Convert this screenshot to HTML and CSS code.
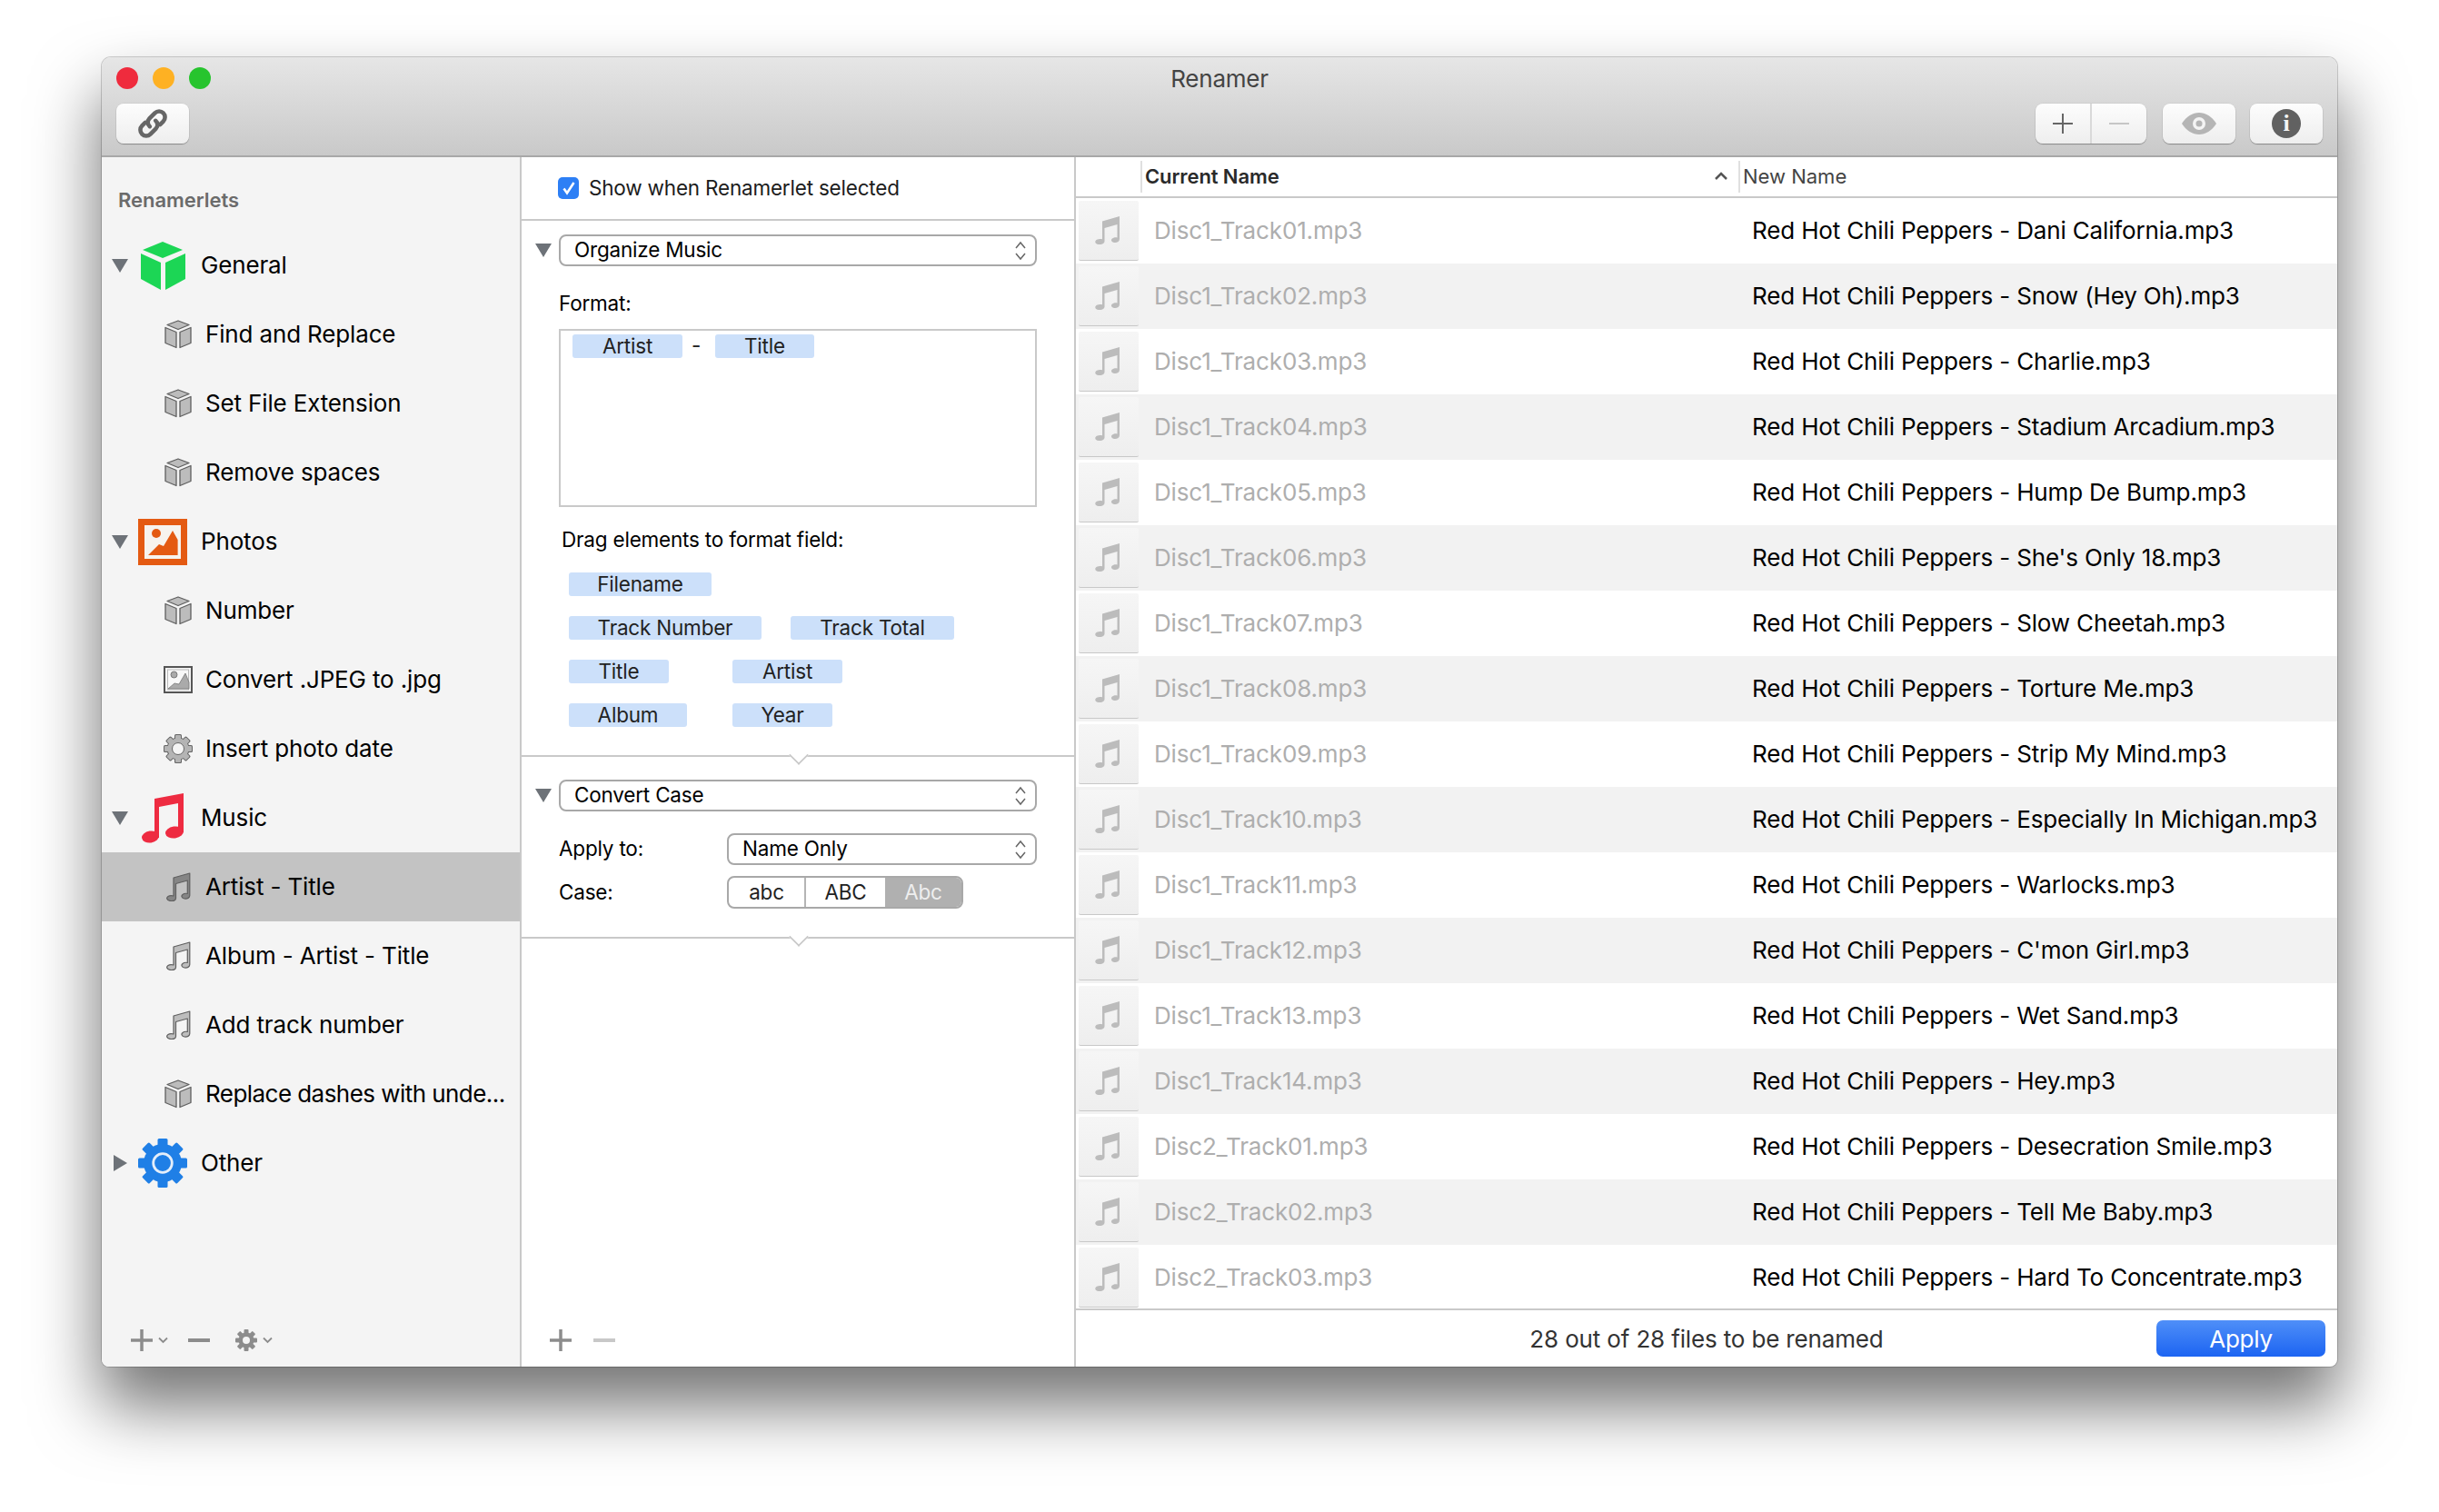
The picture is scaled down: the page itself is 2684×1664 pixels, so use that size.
FILE: index.html
```html
<!DOCTYPE html>
<html lang="en">
<head>
<meta charset="utf-8">
<title>Renamer</title>
<link rel="stylesheet" href="styles.css">
</head>
<body>
<svg class="defs" width="0" height="0" aria-hidden="true">
  <symbol id="mini-cube" viewBox="0 0 30 32">
    <g fill="#bcbcbc" stroke="#5f5f5f" stroke-width="1.3" stroke-linejoin="round">
      <path d="M15 1l12 4.500-12 5-12-5z"/>
      <path d="M1 8.500l12 5v17l-12-5z"/>
      <path d="M29 8.500l-12 5v17l12-5z"/>
    </g>
  </symbol>
  <symbol id="mini-note" viewBox="0 0 27 32">
    <path d="M8.500 6L26.300 1V25.500C26.300 28 23.500 29.500 20.500 29C17.500 28.500 16.500 26 18.500 24.500C20 23.300 22 23 23.800 23.500V9L11 12.500V28.500C11 31 8 32 4.500 31.400C1 30.800 .2 28 2.500 26.500C4 25.500 6.500 25.400 8.500 26Z" fill="currentColor" stroke="#5f5f5f" stroke-width="1.2" stroke-linejoin="round"/>
  </symbol>
  <symbol id="file-note" viewBox="0 0 27 31">
    <path d="M8 5.500L27 0V25C27 28 24 29.500 21 29C18 28.500 17 26 19 24.500C21 23 23 23 24.500 23.500V9L10.500 13V27.500C10.500 30 7.500 31.500 4 31C0 30.500-1 27.500 2 25.800C4 24.700 6 24.700 8 25.300Z" fill="#bcbcbc"/>
  </symbol>
  <symbol id="mini-gear" viewBox="0 0 32 32">
    <g fill="#666">
      <circle cx="16" cy="16" r="12.500"/>
      <rect x="12" y="0" width="8" height="32" rx="1.500"/>
      <rect x="12" y="0" width="8" height="32" rx="1.500" transform="rotate(45 16 16)"/>
      <rect x="12" y="0" width="8" height="32" rx="1.500" transform="rotate(90 16 16)"/>
      <rect x="12" y="0" width="8" height="32" rx="1.500" transform="rotate(135 16 16)"/>
    </g>
    <g fill="#b4b4b4">
      <circle cx="16" cy="16" r="11.500"/>
      <rect x="13" y="1" width="6" height="30" rx="1"/>
      <rect x="13" y="1" width="6" height="30" rx="1" transform="rotate(45 16 16)"/>
      <rect x="13" y="1" width="6" height="30" rx="1" transform="rotate(90 16 16)"/>
      <rect x="13" y="1" width="6" height="30" rx="1" transform="rotate(135 16 16)"/>
    </g>
    <circle cx="16" cy="16" r="6.500" fill="#f4f4f4" stroke="#666" stroke-width="1"/>
  </symbol>
</svg>

<div class="window">
  <header class="titlebar">
    <div class="titlerow">
      <div class="lights">
        <span class="light red"></span>
        <span class="light amber"></span>
        <span class="light green"></span>
      </div>
      <div class="title">Renamer</div>
      <div></div>
    </div>
    <div class="toolbar">
      <button class="tool">
        <svg width="36" height="36" viewBox="-18 -18 36 36" fill="none" stroke="#666" stroke-width="4.600" stroke-linecap="round">
          <g transform="rotate(-45)">
            <path d="M-4.500 0a6 6 0 0 1 6-6.500H10a6.500 6.500 0 0 1 0 13H5"/>
            <path d="M4.500 0a6 6 0 0 1-6 6.500H-10a6.500 6.500 0 0 1 0-13H-5"/>
          </g>
        </svg>
      </button>
      <div class="tool-group">
        <div class="tool-seg">
          <button class="seg seg-l">
            <svg width="24" height="24" viewBox="0 0 24 24" stroke="#666" stroke-width="2"><path d="M12 1v22M1 12h22"/></svg>
          </button>
          <button class="seg">
            <svg width="24" height="24" viewBox="0 0 24 24" stroke="#c6c6c6" stroke-width="2"><path d="M1 12h22"/></svg>
          </button>
        </div>
        <button class="tool">
          <svg width="40" height="26" viewBox="0 0 40 26"><path d="M1 13C6 5 13 1 20 1S34 5 39 13C34 21 27 25 20 25S6 21 1 13Z" fill="#b5b5b5"/><circle cx="20" cy="13" r="7" fill="#f4f4f4"/><circle cx="20" cy="13" r="3.500" fill="#b5b5b5"/></svg>
        </button>
        <button class="tool">
          <span class="info">i</span>
        </button>
      </div>
    </div>
  </header>

  <div class="panes">
    <aside class="sidebar">
      <div class="side-head">Renamerlets</div>
      <nav class="tree">
        <div class="row group">
          <span class="tri"></span>
          <span class="gicon">
            <svg width="49" height="53" viewBox="0 0 49 53" fill="#1cd655"><path d="M24 0l22 9-22 9-22-9z"/><path d="M0 13l22 10v30L0 41z"/><path d="M49 13L27 23v30l22-12z"/></svg>
          </span>
          <span class="rtext">General</span>
        </div>
        <div class="row child"><svg class="cicon"><use href="#mini-cube"/></svg><span class="rtext">Find and Replace</span></div>
        <div class="row child"><svg class="cicon"><use href="#mini-cube"/></svg><span class="rtext">Set File Extension</span></div>
        <div class="row child"><svg class="cicon"><use href="#mini-cube"/></svg><span class="rtext">Remove spaces</span></div>
        <div class="row group">
          <span class="tri"></span>
          <span class="gicon">
            <svg width="54" height="51" viewBox="0 0 54 51"><rect width="54" height="51" fill="#e45a12"/><rect x="7" y="7" width="40" height="37" fill="#f7f3ee"/><circle cx="20" cy="16" r="5" fill="#e45a12"/><path d="M11 40l12-12 5 2 10-17 5.600 10V40z" fill="#e45a12"/></svg>
          </span>
          <span class="rtext">Photos</span>
        </div>
        <div class="row child"><svg class="cicon"><use href="#mini-cube"/></svg><span class="rtext">Number</span></div>
        <div class="row child">
          <svg class="cicon" viewBox="0 0 32 32"><rect x="1" y="2" width="30" height="28" fill="#f4f4f4" stroke="#555" stroke-width="2"/><rect x="4.500" y="5" width="23" height="22" fill="#f8f8f8" stroke="#bbb"/><circle cx="11.500" cy="10.500" r="3.500" fill="#aaa" stroke="#666" stroke-width=".8"/><path d="M5 26l7-6 5 1 7-12 4 10v7z" fill="#aaa" stroke="#777" stroke-width=".8"/></svg>
          <span class="rtext">Convert .JPEG to .jpg</span>
        </div>
        <div class="row child"><svg class="cicon"><use href="#mini-gear"/></svg><span class="rtext">Insert photo date</span></div>
        <div class="row group">
          <span class="tri"></span>
          <span class="gicon">
            <svg width="46" height="55" viewBox="0 0 46 55" fill="#ee2b41"><path d="M14 6L46 0V43H40V11L19 15V49H14Z"/><ellipse cx="36" cy="43" rx="10" ry="6.500" transform="rotate(-8 36 43)"/><ellipse cx="9.500" cy="48" rx="9.500" ry="6.500" transform="rotate(-8 9.500 48)"/></svg>
          </span>
          <span class="rtext">Music</span>
        </div>
        <div class="row child selected"><svg class="cicon"><use href="#mini-note"/></svg><span class="rtext">Artist - Title</span></div>
        <div class="row child"><svg class="cicon"><use href="#mini-note"/></svg><span class="rtext">Album - Artist - Title</span></div>
        <div class="row child"><svg class="cicon"><use href="#mini-note"/></svg><span class="rtext">Add track number</span></div>
        <div class="row child"><svg class="cicon"><use href="#mini-cube"/></svg><span class="rtext tight">Replace dashes with unde...</span></div>
        <div class="row group">
          <span class="tri closed"></span>
          <span class="gicon">
            <svg width="54" height="54" viewBox="0 0 54 54"><g fill="#1f7fe6"><circle cx="27" cy="27" r="21"/><rect x="21.500" y="0" width="11" height="54" rx="1.500"/><rect x="21.500" y="0" width="11" height="54" rx="1.500" transform="rotate(45 27 27)"/><rect x="21.500" y="0" width="11" height="54" rx="1.500" transform="rotate(90 27 27)"/><rect x="21.500" y="0" width="11" height="54" rx="1.500" transform="rotate(135 27 27)"/></g><circle cx="27" cy="27" r="10.300" fill="#1f7fe6" stroke="#e4eefa" stroke-width="2.800"/></svg>
          </span>
          <span class="rtext">Other</span>
        </div>
      </nav>
      <div class="side-foot">
        <svg width="24" height="24" viewBox="0 0 24 24" stroke="#8c8c8c" stroke-width="3.500"><path d="M12 0v24M0 12h24"/></svg>
        <svg class="f-chev" width="11" height="8" viewBox="0 0 11 8" fill="none" stroke="#8c8c8c" stroke-width="1.800"><path d="M1 1.500l4.500 4.500L10 1.500"/></svg>
        <svg class="f-minus" width="24" height="4" viewBox="0 0 24 4" fill="#8c8c8c"><rect width="24" height="4"/></svg>
        <svg class="f-gear" width="24" height="24" viewBox="0 0 24 24"><g fill="#8c8c8c"><circle cx="12" cy="12" r="8.500"/><rect x="9.500" y="0" width="5" height="24" rx="1"/><rect x="9.500" y="0" width="5" height="24" rx="1" transform="rotate(45 12 12)"/><rect x="9.500" y="0" width="5" height="24" rx="1" transform="rotate(90 12 12)"/><rect x="9.500" y="0" width="5" height="24" rx="1" transform="rotate(135 12 12)"/></g><circle cx="12" cy="12" r="4" fill="#f4f4f4"/></svg>
        <svg class="f-chev" width="11" height="8" viewBox="0 0 11 8" fill="none" stroke="#8c8c8c" stroke-width="1.800"><path d="M1 1.500l4.500 4.500L10 1.500"/></svg>
      </div>
    </aside>

    <section class="editor">
      <div class="show-row">
        <span class="check"><svg width="16" height="16" viewBox="0 0 16 16" fill="none" stroke="#fff" stroke-width="2.600"><path d="M2.500 8.500l3.500 5L13.500 2"/></svg></span>
        <span class="nudge">Show when Renamerlet selected</span>
      </div>

      <div class="block block-music">
        <div class="head">
          <span class="tri small"></span>
          <div class="popup"><span class="nudge">Organize Music</span><svg class="updown" width="14" height="22" viewBox="0 0 14 22" fill="none" stroke="#666" stroke-width="1.500"><path d="M2 8l5-6 5 6M2 14l5 6 5-6"/></svg></div>
        </div>
        <div class="label format-label">Format:</div>
        <div class="format-box">
          <span class="token w121">Artist</span>
          <span class="dash">-</span>
          <span class="token w109">Title</span>
        </div>
        <div class="label drag-label">Drag elements to format field:</div>
        <div class="palette">
          <div class="pal-row"><span class="token w157">Filename</span></div>
          <div class="pal-row"><span class="token w212">Track Number</span><span class="token w180 after-track">Track Total</span></div>
          <div class="pal-row"><span class="token w110">Title</span><span class="token w121 after-title">Artist</span></div>
          <div class="pal-row"><span class="token w130">Album</span><span class="token w110 after-album">Year</span></div>
        </div>
      </div>

      <div class="block block-case">
        <div class="head">
          <span class="tri small"></span>
          <div class="popup"><span class="nudge">Convert Case</span><svg class="updown" width="14" height="22" viewBox="0 0 14 22" fill="none" stroke="#666" stroke-width="1.500"><path d="M2 8l5-6 5 6M2 14l5 6 5-6"/></svg></div>
        </div>
        <div class="form-row apply-row">
          <span class="form-label">Apply to:</span>
          <div class="popup"><span class="nudge">Name Only</span><svg class="updown" width="14" height="22" viewBox="0 0 14 22" fill="none" stroke="#666" stroke-width="1.500"><path d="M2 8l5-6 5 6M2 14l5 6 5-6"/></svg></div>
        </div>
        <div class="form-row case-row">
          <span class="form-label">Case:</span>
          <div class="segmented">
            <span class="sg sg-a">abc</span>
            <span class="sg sg-b">ABC</span>
            <span class="sg sg-c">Abc</span>
          </div>
        </div>
      </div>

      <div class="editor-fill"></div>
      <div class="editor-foot">
        <svg width="24" height="24" viewBox="0 0 24 24" stroke="#8c8c8c" stroke-width="3.500"><path d="M12 0v24M0 12h24"/></svg>
        <svg width="24" height="4" viewBox="0 0 24 4" fill="#c8c8c8"><rect width="24" height="4"/></svg>
      </div>
    </section>

    <main class="files">
      <div class="thead">
        <div class="th-icon"></div>
        <div class="th th-current"><span>Current Name</span><svg width="14" height="9" viewBox="0 0 14 9" fill="none" stroke="#555" stroke-width="2.500"><path d="M1 8l6-6 6 6"/></svg></div>
        <div class="th th-new">New Name</div>
      </div>
      <div class="tbody">
        <div class="frow"><span class="ficon"><svg width="27" height="31"><use href="#file-note"/></svg></span><span class="cur">Disc1_Track01.mp3</span><span class="new">Red Hot Chili Peppers - Dani California.mp3</span></div>
        <div class="frow"><span class="ficon"><svg width="27" height="31"><use href="#file-note"/></svg></span><span class="cur">Disc1_Track02.mp3</span><span class="new">Red Hot Chili Peppers - Snow (Hey Oh).mp3</span></div>
        <div class="frow"><span class="ficon"><svg width="27" height="31"><use href="#file-note"/></svg></span><span class="cur">Disc1_Track03.mp3</span><span class="new">Red Hot Chili Peppers - Charlie.mp3</span></div>
        <div class="frow"><span class="ficon"><svg width="27" height="31"><use href="#file-note"/></svg></span><span class="cur">Disc1_Track04.mp3</span><span class="new">Red Hot Chili Peppers - Stadium Arcadium.mp3</span></div>
        <div class="frow"><span class="ficon"><svg width="27" height="31"><use href="#file-note"/></svg></span><span class="cur">Disc1_Track05.mp3</span><span class="new">Red Hot Chili Peppers - Hump De Bump.mp3</span></div>
        <div class="frow"><span class="ficon"><svg width="27" height="31"><use href="#file-note"/></svg></span><span class="cur">Disc1_Track06.mp3</span><span class="new">Red Hot Chili Peppers - She's Only 18.mp3</span></div>
        <div class="frow"><span class="ficon"><svg width="27" height="31"><use href="#file-note"/></svg></span><span class="cur">Disc1_Track07.mp3</span><span class="new">Red Hot Chili Peppers - Slow Cheetah.mp3</span></div>
        <div class="frow"><span class="ficon"><svg width="27" height="31"><use href="#file-note"/></svg></span><span class="cur">Disc1_Track08.mp3</span><span class="new">Red Hot Chili Peppers - Torture Me.mp3</span></div>
        <div class="frow"><span class="ficon"><svg width="27" height="31"><use href="#file-note"/></svg></span><span class="cur">Disc1_Track09.mp3</span><span class="new">Red Hot Chili Peppers - Strip My Mind.mp3</span></div>
        <div class="frow"><span class="ficon"><svg width="27" height="31"><use href="#file-note"/></svg></span><span class="cur">Disc1_Track10.mp3</span><span class="new">Red Hot Chili Peppers - Especially In Michigan.mp3</span></div>
        <div class="frow"><span class="ficon"><svg width="27" height="31"><use href="#file-note"/></svg></span><span class="cur">Disc1_Track11.mp3</span><span class="new">Red Hot Chili Peppers - Warlocks.mp3</span></div>
        <div class="frow"><span class="ficon"><svg width="27" height="31"><use href="#file-note"/></svg></span><span class="cur">Disc1_Track12.mp3</span><span class="new">Red Hot Chili Peppers - C'mon Girl.mp3</span></div>
        <div class="frow"><span class="ficon"><svg width="27" height="31"><use href="#file-note"/></svg></span><span class="cur">Disc1_Track13.mp3</span><span class="new">Red Hot Chili Peppers - Wet Sand.mp3</span></div>
        <div class="frow"><span class="ficon"><svg width="27" height="31"><use href="#file-note"/></svg></span><span class="cur">Disc1_Track14.mp3</span><span class="new">Red Hot Chili Peppers - Hey.mp3</span></div>
        <div class="frow"><span class="ficon"><svg width="27" height="31"><use href="#file-note"/></svg></span><span class="cur">Disc2_Track01.mp3</span><span class="new">Red Hot Chili Peppers - Desecration Smile.mp3</span></div>
        <div class="frow"><span class="ficon"><svg width="27" height="31"><use href="#file-note"/></svg></span><span class="cur">Disc2_Track02.mp3</span><span class="new">Red Hot Chili Peppers - Tell Me Baby.mp3</span></div>
        <div class="frow"><span class="ficon"><svg width="27" height="31"><use href="#file-note"/></svg></span><span class="cur">Disc2_Track03.mp3</span><span class="new">Red Hot Chili Peppers - Hard To Concentrate.mp3</span></div>
      </div>
      <div class="status">
        <span class="status-text">28 out of 28 files to be renamed</span>
        <button class="apply">Apply</button>
      </div>
    </main>
  </div>
</div>
</body>
</html>
```
FILE: styles.css
```css
* { box-sizing: border-box; }
html, body { margin: 0; height: 100%; }
body {
  background: #fff;
  font-family: Inter, "Noto Sans", sans-serif;
  color: #000;
  padding: 63px 112px 0;
  overflow: hidden;
}
.defs { position: absolute; }

.window {
  width: 2460px;
  height: 1441px;
  border-radius: 10px 10px 8px 8px;
  background: #fff;
  box-shadow: 0 0 0 1px rgba(0,0,0,.18), 0 42px 72px 2px rgba(0,0,0,.55);
  display: flex;
  flex-direction: column;
  overflow: hidden;
}

.titlebar {
  height: 110px;
  flex: none;
  background: linear-gradient(#e6e6e6, #c9c9c9);
  border-bottom: 2px solid #a8a8a8;
}
.titlerow {
  height: 46px;
  display: grid;
  grid-template-columns: 1fr auto 1fr;
  align-items: center;
}
.lights { display: flex; gap: 16px; padding-left: 16px; }
.light { width: 24px; height: 24px; border-radius: 50%; }
.red { background: #ef2b3d; }
.amber { background: #feb123; }
.green { background: #27c42e; }
.title { font-size: 26px; color: #444; letter-spacing: -.25px; }

.toolbar {
  margin-top: 5px;
  padding: 0 16px;
  display: flex;
  justify-content: space-between;
}
.tool-group { display: flex; gap: 16px; }
.tool, .tool-seg {
  height: 44px;
  border: 0;
  padding: 0;
  border-radius: 8px;
  background: linear-gradient(#fdfdfd, #eeeeee);
  box-shadow: 0 1px 1px rgba(0,0,0,.3), 0 0 0 .5px rgba(0,0,0,.08);
}
.tool {
  width: 80px;
  display: flex;
  align-items: center;
  justify-content: center;
}
.tool-seg { display: flex; width: 122px; margin-right: 2px; }
.seg {
  flex: 1;
  border: 0;
  padding: 0;
  background: none;
  display: flex;
  align-items: center;
  justify-content: center;
}
.seg-l { border-right: 2px solid #d9d9d9; flex: none; width: 62px; }
.info {
  width: 32px;
  height: 32px;
  border-radius: 50%;
  background: #616161;
  color: #f4f4f4;
  font: bold 26px/32px "Liberation Serif", serif;
  text-align: center;
}

.panes { flex: 1; display: flex; min-height: 0; }

.sidebar {
  width: 462px;
  flex: none;
  background: #f4f4f4;
  border-right: 2px solid #c9c9c9;
  display: flex;
  flex-direction: column;
}
.side-head {
  padding: 34px 0 0 18px;
  height: 81px;
  font-size: 22px;
  font-weight: 600;
  line-height: 26px;
  color: #6b6b6b;
  letter-spacing: -.05px;
}
.tree { flex: 1; }
.row {
  height: 76px;
  display: flex;
  align-items: center;
  font-size: 26px;
  letter-spacing: -.15px;
  white-space: nowrap;
}
.rtext { padding-bottom: 2px; }
.tight { letter-spacing: -.55px; }
.group { padding-left: 11px; }
.child { padding-left: 68px; gap: 14px; }
.cicon { flex: none; width: 32px; height: 32px; color: #bdbdbd; }
.selected { background: #c3c3c3; }
.selected .cicon { color: #858585; }
.gicon {
  width: 54px;
  height: 56px;
  margin: 0 15px 0 11px;
  display: flex;
  align-items: center;
  justify-content: center;
  flex: none;
}
.tri {
  width: 0;
  height: 0;
  border-left: 9px solid transparent;
  border-right: 9px solid transparent;
  border-top: 15px solid #6d7278;
  flex: none;
}
.tri.closed {
  border-top: 9px solid transparent;
  border-bottom: 9px solid transparent;
  border-left: 15px solid #6d7278;
  border-right: 0;
  margin: 0 1px 0 2px;
}
.side-foot {
  height: 58px;
  padding-left: 32px;
  display: flex;
  align-items: center;
}
.f-chev { margin-left: 6px; }
.f-minus { margin-left: 22px; }
.f-gear { margin-left: 28px; }

.editor {
  width: 610px;
  flex: none;
  border-right: 2px solid #c9c9c9;
  display: flex;
  flex-direction: column;
  font-size: 22.5px;
  letter-spacing: -.2px;
}
.nudge { padding-bottom: 2px; }
.show-row {
  height: 70px;
  flex: none;
  padding-left: 40px;
  display: flex;
  align-items: center;
  gap: 11px;
  border-bottom: 2px solid #c9c9c9;
  color: #1c1c1c;
}
.check {
  width: 23px;
  height: 24px;
  border-radius: 5px;
  background: #2d7ff5;
  display: flex;
  align-items: center;
  justify-content: center;
}
.block {
  flex: none;
  position: relative;
  border-bottom: 2px solid #c9c9c9;
  padding: 15px 41px 0 15px;
}
.block::after {
  content: "";
  position: absolute;
  left: 296px;
  bottom: -9px;
  width: 16px;
  height: 16px;
  background: #fff;
  border-right: 2px solid #c9c9c9;
  border-bottom: 2px solid #c9c9c9;
  transform: rotate(45deg) scale(.85);
}
.block-music { height: 590px; }
.block-case { height: 200px; }
.head { display: flex; align-items: center; }
.tri.small { margin-right: 8px; }
.popup {
  flex: 1;
  height: 35px;
  border: 2px solid #a8a8a8;
  border-radius: 8px;
  padding: 0 9px 0 15px;
  display: flex;
  align-items: center;
  justify-content: space-between;
  background: #fff;
}
.label { margin-left: 26px; line-height: 24px; }
.format-label { margin-top: 29px; }
.format-box {
  margin: 16px 0 0 26px;
  height: 196px;
  border: 2px solid #c9c9c9;
  padding: 4px 0 0 13px;
  display: flex;
  align-items: flex-start;
}
.token {
  height: 26px;
  padding-bottom: 2px;
  background: #cce0fa;
  border-radius: 3px;
  display: flex;
  align-items: center;
  justify-content: center;
  color: #222;
  flex: none;
}
.w109 { width: 109px; }
.w110 { width: 110px; }
.w121 { width: 121px; }
.w130 { width: 130px; }
.w157 { width: 157px; }
.w180 { width: 180px; }
.w212 { width: 212px; }
.dash { width: 36px; padding-right: 6px; text-align: center; line-height: 24px; color: #222; }
.drag-label { margin: 24px 0 0 29px; }
.palette {
  margin: 24px 0 0 37px;
  display: flex;
  flex-direction: column;
  gap: 22px;
}
.pal-row { display: flex; }
.after-track { margin-left: 32px; }
.after-title { margin-left: 70px; }
.after-album { margin-left: 50px; }

.block-case .head { margin-top: 10px; }
.form-row { display: flex; align-items: center; padding-left: 26px; }
.form-label { width: 185px; flex: none; padding-bottom: 2px; }
.apply-row { margin-top: 24px; }
.case-row { margin-top: 12px; }
.segmented {
  width: 260px;
  height: 36px;
  display: flex;
  border: 2px solid #a8a8a8;
  border-radius: 8px;
  overflow: hidden;
}
.sg { display: flex; align-items: center; justify-content: center; color: #222; padding-bottom: 2px; }
.sg-a { width: 85px; border-right: 2px solid #b5b5b5; }
.sg-b { width: 87px; }
.sg-c { flex: 1; background: #b0b0b0; color: #eee; }
.editor-fill { flex: 1; }
.editor-foot {
  height: 58px;
  flex: none;
  padding-left: 31px;
  display: flex;
  align-items: center;
  gap: 24px;
}

.files { flex: 1; min-width: 0; display: flex; flex-direction: column; }
.thead {
  height: 45px;
  flex: none;
  border-bottom: 2px solid #c9c9c9;
  display: grid;
  grid-template-columns: 71px 658px 1fr;
  align-items: center;
  font-size: 22px;
}
.th {
  height: 35px;
  border-left: 2px solid #e0e0e0;
  display: flex;
  align-items: center;
  padding: 0 0 2px 3px;
}
.th-current { justify-content: space-between; padding-right: 12px; font-weight: 600; color: #2a2a2a; letter-spacing: -.1px; }
.th-new { color: #444; }
.tbody { flex: none; }
.frow {
  height: 72px;
  display: grid;
  grid-template-columns: 71px 658px 1fr;
  align-items: center;
  font-size: 26px;
  letter-spacing: -.15px;
  white-space: nowrap;
}
.frow:nth-child(even) { background: #f2f2f2; }
.ficon {
  width: 66px;
  height: 66px;
  margin-left: 3px;
  padding-right: 3px;
  background: linear-gradient(#f6f6f6, #eeeeee);
  border-bottom: 1px solid #c8c8c8;
  border-radius: 2px;
  display: flex;
  align-items: center;
  justify-content: center;
}
.cur { color: #aeaeae; padding: 0 0 2px 15px; }
.new { padding: 0 0 2px 15px; }
.status {
  flex: 1;
  margin-top: -2px;
  position: relative;
  border-top: 2px solid #c9c9c9;
  display: flex;
  align-items: center;
  padding-right: 13px;
  justify-content: flex-end;
}
.status-text {
  font-size: 26px;
  color: #333;
  letter-spacing: -.15px;
  position: absolute;
  left: 0;
  right: 0;
  text-align: center;
}
.apply {
  position: relative;
  width: 186px;
  height: 40px;
  border: 0;
  border-radius: 7px;
  background: linear-gradient(#4f8ff8, #1c64f2);
  color: #fff;
  font: 26px Inter, sans-serif;
  letter-spacing: -.25px;
}
```
